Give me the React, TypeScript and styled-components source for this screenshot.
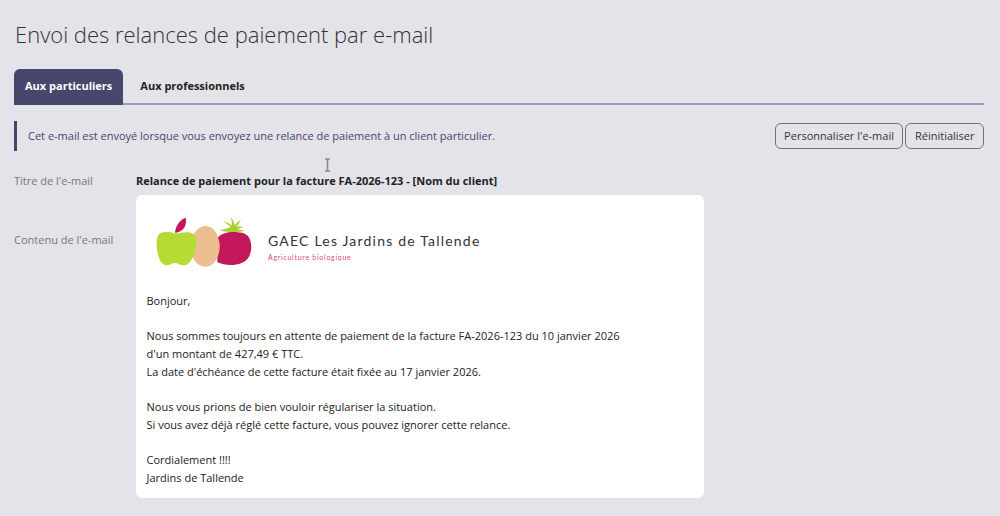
import React from "react";
import styled, { createGlobalStyle } from "styled-components";

const Global = createGlobalStyle`
  html, body { margin: 0; padding: 0; background: #e3e3e9; }
  body { font-family: "Open Sans", "Noto Sans", sans-serif; color: #222; overflow: hidden; }
  * { box-sizing: border-box; }
`;

const Page = styled.div`
  position: relative;
  width: 1000px;
  height: 516px;
  padding: 20px 16px 0 14px;
  overflow: hidden;
`;
const Title = styled.h1`
  margin: 0 0 20px;
  padding-left: 1px;
  height: 29px;
  font-size: 22px;
  line-height: 29px;
  font-weight: 300;
  color: #333;
`;
const Tabs = styled.div`
  display: flex;
  height: 36px;
  border-bottom: 2px solid #9c9bb8;
`;
const Tab = styled.div<{ $active?: boolean }>`
  height: 36px;
  padding: 0 11px 4px;
  display: flex;
  align-items: center;
  font-size: 11px;
  font-weight: 700;
  border-radius: 6px 6px 0 0;
  color: ${(p) => (p.$active ? "#fff" : "#222")};
  background: ${(p) => (p.$active ? "#47466d" : "transparent")};
  margin-right: ${(p) => (p.$active ? "6px" : "0")};
`;
const NoticeRow = styled.div`
  display: flex;
  align-items: center;
  justify-content: space-between;
  margin-top: 16px;
  height: 30px;
`;
const Notice = styled.div`
  height: 30px;
  border-left: 3px solid #47466d;
  padding: 0 0 2px 11px;
  display: flex;
  align-items: center;
  font-size: 11px;
  color: #47466d;
`;
const Buttons = styled.div`
  display: flex;
  gap: 2px;
`;
const Button = styled.button`
  height: 26px;
  padding: 0 8.5px 1px;
  border: 1px solid #6f6f78;
  border-radius: 6px;
  background: transparent;
  font-family: inherit;
  font-size: 11px;
  color: #333;
`;
const FieldGrid = styled.div`
  display: grid;
  grid-template-columns: 122px 568px;
  margin-top: 20px;
`;
const Label = styled.div`
  font-size: 11px;
  color: #77777f;
  line-height: 20px;
`;
const Subject = styled.div`
  font-size: 11px;
  font-weight: 700;
  color: #222;
  line-height: 20px;
  height: 24px;
`;
const ContentLabel = styled(Label)`
  padding-top: 35px;
`;
const Mail = styled.div`
  background: #fff;
  border-radius: 6px;
  height: 303px;
  padding: 12px 10.5px 0;
`;
const Logo = styled.div`
  display: flex;
  align-items: center;
  height: 69px;
  margin-left: 9.5px;
`;
const LogoText = styled.div`
  margin-left: 15px;
  padding-top: 10px;
`;
const LogoName = styled.div`
  font-family: "Lato", sans-serif;
  font-size: 14px;
  line-height: 17px;
  letter-spacing: 1.2px;
  color: #333;
`;
const LogoSub = styled.div`
  font-family: "Lato", sans-serif;
  font-size: 7px;
  line-height: 10px;
  margin-top: 3px;
  letter-spacing: 0.71px;
  color: #d84a80;
`;
const Body = styled.div`
  margin-top: 16px;
  font-size: 11px;
  line-height: 17.7px;
  color: #222;
`;
const Para = styled.p`
  margin: 0 0 17.7px;
`;
const Cursor = styled.svg`
  position: absolute;
  left: 324px;
  top: 158px;
`;

export default function App() {
  return (
    <Page>
      <Global />
      <Title>Envoi des relances de paiement par e-mail</Title>
      <Tabs>
        <Tab $active>Aux particuliers</Tab>
        <Tab>Aux professionnels</Tab>
      </Tabs>
      <NoticeRow>
        <Notice>Cet e-mail est envoyé lorsque vous envoyez une relance de paiement à un client particulier.</Notice>
        <Buttons>
          <Button>Personnaliser l'e-mail</Button>
          <Button>Réinitialiser</Button>
        </Buttons>
      </NoticeRow>
      <FieldGrid>
        <Label>Titre de l'e-mail</Label>
        <Subject>Relance de paiement pour la facture FA-2026-123 - [Nom du client]</Subject>
        <ContentLabel>Contenu de l'e-mail</ContentLabel>
        <Mail>
          <Logo>
            <svg width="97" height="52" viewBox="78 60 291 156">
              <path d="M262 125c12-12 30-18 55-17 18 1 34 4 41 18 8 17 8 41-2 58-9 15-28 22-48 23-17 1-33-3-46-8z" fill="#c2185b" />
              <path d="M270 103c12-3 22-6 32-10-6-6-14-12-24-18 10 2 20 7 28 13 0-8-2-18-3-25 5 6 9 16 11 25 5-6 11-13 19-17-4 7-10 15-13 21 8-1 16-1 21 1-7 3-14 5-20 7 8 1 16 2 23 5-14 3-30 3-45 3-11 0-21-1-29-5z" fill="#a6d22f" />
              <path d="M228 90c24 0 38 30 41 55 2 30-14 67-42 67-28 0-45-27-45-60 0-30 17-62 46-62z" fill="#ecbe8f" />
              <path d="M90 112c13-6 30-4 45 0 17 1 36-8 52 0 14 8 15 31 9 52-6 20-17 43-33 44-13 1-20-7-28-7-9 0-17 8-27 7C90 205 81 175 80 150c-1-15 1-31 10-38z" fill="#b6dc34" />
              <path d="M135 110c1-18 12-38 32-45 3 12 0 26-8 35-7 7-15 10-24 10z" fill="#c2185b" />
            </svg>
            <LogoText>
              <LogoName>GAEC Les Jardins de Tallende</LogoName>
              <LogoSub>Agriculture biologique</LogoSub>
            </LogoText>
          </Logo>
          <Body>
            <Para>Bonjour,</Para>
            <Para>
              Nous sommes toujours en attente de paiement de la facture FA-2026-123 du 10 janvier 2026
              <br />
              d'un montant de 427,49 € TTC.
              <br />
              La date d'échéance de cette facture était fixée au 17 janvier 2026.
            </Para>
            <Para>
              Nous vous prions de bien vouloir régulariser la situation.
              <br />
              Si vous avez déjà réglé cette facture, vous pouvez ignorer cette relance.
            </Para>
            <Para>
              Cordialement !!!!
              <br />
              Jardins de Tallende
            </Para>
          </Body>
        </Mail>
      </FieldGrid>
      <Cursor width="7" height="14" viewBox="0 0 7 14">
        <path d="M1 1h5M1 13h5M3.500 1v12" stroke="#8a8a8a" strokeWidth="1.500" fill="none" />
      </Cursor>
    </Page>
  );
}
